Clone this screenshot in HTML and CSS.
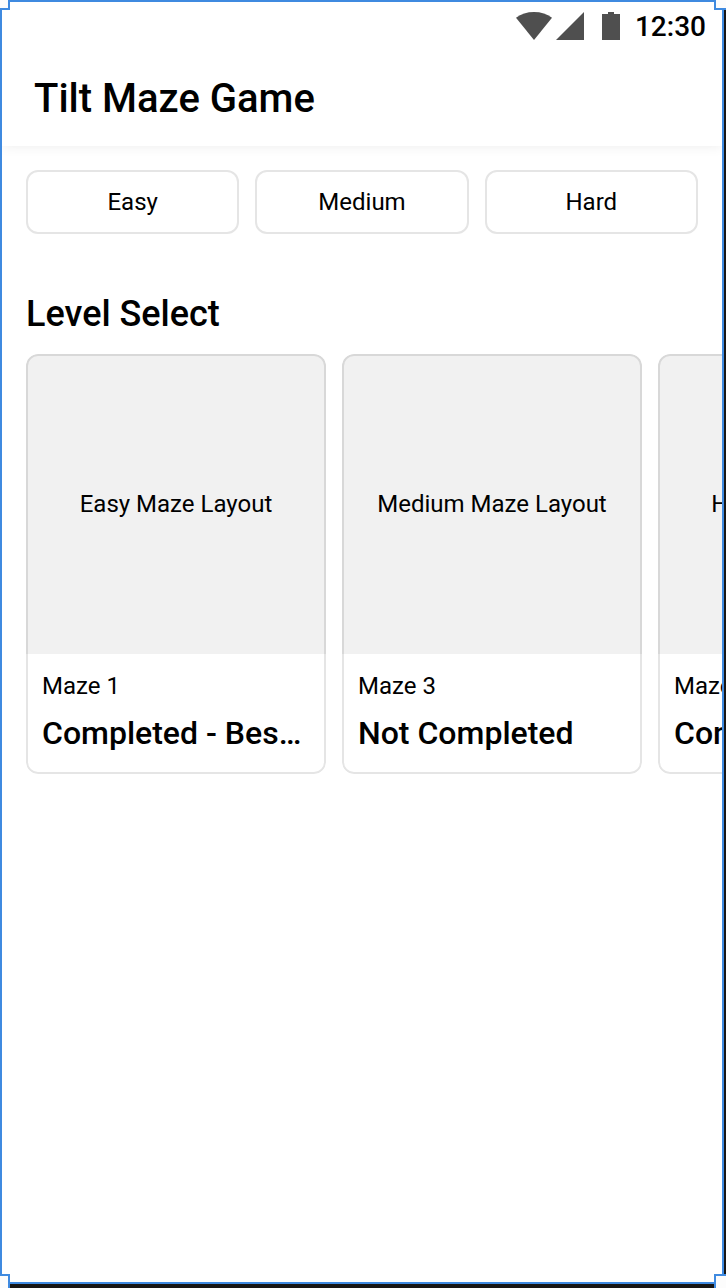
FILE: index.html
```html
<!DOCTYPE html>
<html lang="en">
<head>
<meta charset="utf-8">
<title>Tilt Maze Game</title>
<link rel="stylesheet" href="styles.css">
</head>
<body>
<div class="canvas">
  <div class="screen">
    <header class="header">
      <div class="status">
        <svg class="icons" width="104" height="28" viewBox="0 0 104 28" fill="#4f4f4f">
          <path d="M0 5.8C5 2 11 0 18 0s13 2 18 5.8L18 28z"/>
          <path d="M40 28L68 0v28z"/>
          <path d="M86 2h6V0h6v2h6v26H86z"/>
        </svg>
        <span class="time">12:30</span>
      </div>
      <h1 class="title">Tilt Maze Game</h1>
    </header>
    <nav class="tabs">
      <button class="tab">Easy</button>
      <button class="tab">Medium</button>
      <button class="tab">Hard</button>
    </nav>
    <section class="levels">
      <h2 class="heading">Level Select</h2>
      <div class="cards">
        <article class="card">
          <div class="preview">Easy Maze Layout</div>
          <div class="info"><p class="name">Maze 1</p><p class="state">Completed - Bes…</p></div>
        </article>
        <article class="card">
          <div class="preview">Medium Maze Layout</div>
          <div class="info"><p class="name">Maze 3</p><p class="state">Not Completed</p></div>
        </article>
        <article class="card">
          <div class="preview">Hard Maze Layout</div>
          <div class="info"><p class="name">Maze 2</p><p class="state">Completed</p></div>
        </article>
      </div>
    </section>
  </div>
  <span class="handle tl"></span>
  <span class="handle tr"></span>
  <span class="handle bl"></span>
  <span class="handle br"></span>
</div>
</body>
</html>
```
FILE: styles.css
```css
* { box-sizing: border-box; margin: 0; }
body { font-family: Roboto, sans-serif; color: #000; }
.canvas { position: relative; width: 726px; height: 1288px; overflow: hidden; background: #171615; }
.screen { width: 724px; height: 1284px; border: 2px solid #3f8ae0; background: #fff; overflow: hidden; }
.header { height: 144px; box-shadow: 0 0 12px rgba(0, 0, 0, .08); }
.status { display: flex; justify-content: flex-end; align-items: center; height: 48px; padding-right: 16px; gap: 15px; }
.time { padding-top: 2px; font-size: 28px; line-height: 32px; font-weight: 500; }
.title { padding-left: 32px; font-size: 40px; line-height: 48px; margin-top: 25px; font-weight: 500; }
.tabs { display: flex; gap: 16px; padding: 24px 24px 0; }
.tab { flex: 1; height: 64px; padding: 0; border: 2px solid #e5e5e5; border-radius: 12px; background: #fff; color: #000; font: 24px/32px Roboto, sans-serif; }
.levels { padding: 56px 0 0 24px; }
.heading { font-size: 36px; line-height: 48px; font-weight: 500; }
.cards { display: flex; gap: 16px; margin-top: 16px; }
.card { position: relative; flex: 0 0 300px; height: 420px; border-radius: 12px; overflow: hidden; }
.card::after { content: ""; position: absolute; inset: 0; border: 2px solid rgba(0, 0, 0, .1); border-radius: 12px; }
.preview { display: flex; align-items: center; justify-content: center; height: 300px; background: #f1f1f1; font-size: 24px; line-height: 32px; }
.info { padding: 16px; white-space: nowrap; }
.name { font-size: 24px; line-height: 32px; }
.state { margin-top: 7px; font-size: 32px; line-height: 48px; font-weight: 500; }
.handle { position: absolute; width: 10px; height: 10px; background: #fcfcfc; border: 0 solid #3f8ae0; }
.tl { left: 0; top: 0; border-width: 0 2px 2px 0; }
.tr { right: 0; top: 0; width: 12px; border-width: 0 0 2px 2px; }
.bl { left: 0; bottom: 0; height: 14px; border-width: 2px 2px 0 0; }
.br { right: 0; bottom: 0; width: 12px; height: 14px; border-width: 2px 0 0 2px; }
```
